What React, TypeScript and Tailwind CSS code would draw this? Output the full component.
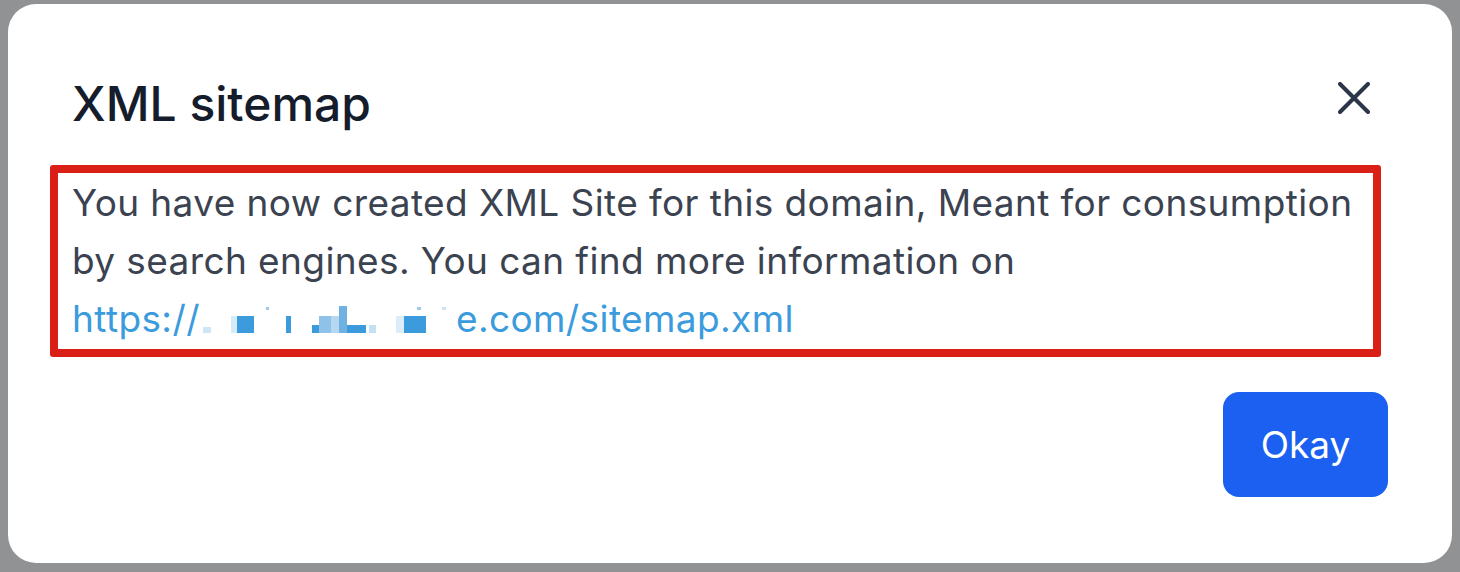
import React from 'react';

const font = { fontFamily: 'Inter, "Noto Sans", sans-serif' };

// pixelated (blurred) part of the domain in the link
const Pixelated: React.FC = () => (
    <svg width="256" height="30" viewBox="0 0 256 30" className="inline-block align-top mt-[15px]">
        <g transform="translate(3 0)">
            <rect x="0" y="22" width="8" height="6" fill="#cde5f5"/>
            <rect x="28" y="11" width="6" height="17" fill="#d6eaf7"/>
            <rect x="34" y="11" width="17" height="17" fill="#3b9bdc"/>
            <rect x="63" y="2" width="3" height="3" fill="#9fcbe9"/>
            <rect x="83" y="11" width="5" height="17" fill="#3b9bdc"/>
            <rect x="109" y="20" width="7" height="8" fill="#3b9bdc"/>
            <rect x="116" y="11" width="12" height="17" fill="#8ec2e8"/>
            <rect x="128" y="11" width="8" height="17" fill="#b5d7ef"/>
            <rect x="136" y="1" width="8" height="27" fill="#6fb2e2"/>
            <rect x="144" y="20" width="19" height="8" fill="#3b9bdc"/>
            <rect x="166" y="20" width="7" height="8" fill="#c4e0f3"/>
            <rect x="193" y="11" width="8" height="17" fill="#dcecf8"/>
            <rect x="201" y="11" width="22" height="17" fill="#3b9bdc"/>
            <rect x="214" y="2" width="4" height="3" fill="#9fcbe9"/>
            <rect x="239" y="2" width="4" height="3" fill="#cfe5f5"/>
        </g>
    </svg>
);

const App: React.FC = () => {
    return (
        <div className="w-[1460px] h-[572px] bg-[#909294] pt-[4px] pl-[8px] pr-[8px] pb-[9px]" style={font}>
            <div className="w-full h-full bg-white rounded-[28px] pt-[71px] px-[64px] pb-[65px] flex flex-col">
                {/* Header */}
                <div className="flex flex-row items-start justify-between h-[58px]">
                    <h2 className="text-[48px] leading-[58px] font-medium text-[#151c2c]">XML sitemap</h2>
                    <button aria-label="Close" className="mt-[7px] mr-[18px]">
                        <svg width="32" height="32" viewBox="0 0 32 32" fill="none" stroke="#2b364a" strokeWidth="4" strokeLinecap="round">
                            <path d="M2 2L30 30M30 2L2 30"/>
                        </svg>
                    </button>
                </div>

                {/* Body, outlined in red */}
                <div className="mt-[32px] -ml-[22px] w-[1331px] border-[8px] border-[#da1f16] rounded-[3px] pl-[14px] py-[1px]">
                    <p className="text-[37px] leading-[58px] tracking-[0.4px] text-[#3b4250]">
                        You have now created XML Site for this domain, Meant for consumption by search engines. You can find more information on
                        <br/>
                        <a className="text-[#3b9bdc]">https://<Pixelated/>e.com/sitemap.xml</a>
                    </p>
                </div>

                {/* Footer */}
                <div className="mt-[35px] flex flex-row justify-end">
                    <button className="w-[165px] h-[105px] rounded-[16px] bg-[#1b60f1] text-white text-[37px]">
                        Okay
                    </button>
                </div>
            </div>
        </div>
    );
};

export default App;
